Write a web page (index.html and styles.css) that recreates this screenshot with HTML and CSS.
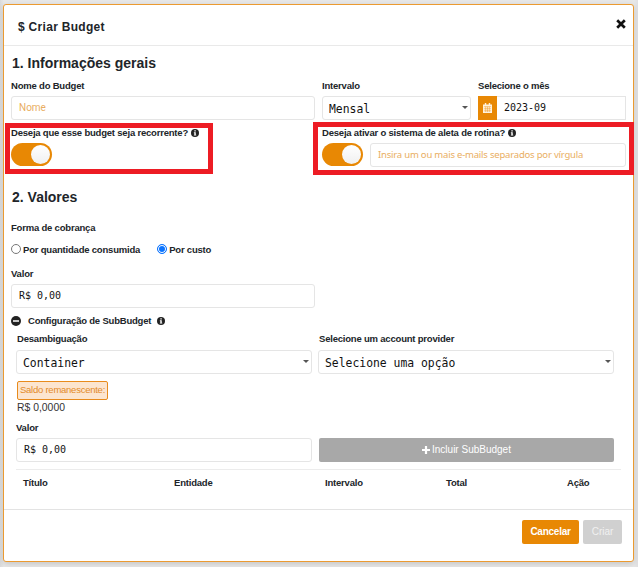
FILE: index.html
```html
<!DOCTYPE html>
<html lang="pt-BR">
<head>
<meta charset="utf-8">
<title>Criar Budget</title>
<link rel="stylesheet" href="styles.css">
</head>
<body>
<svg width="0" height="0" class="defs">
  <symbol id="info" viewBox="0 0 16 16"><circle cx="8" cy="8" r="8" fill="#222"/><path d="M6.7 2.6h2.8v2.3H6.7zM5.7 6.5h3.8v4.8h1v1.9H5.7v-1.9h1V8.4h-1z" fill="#fff"/></symbol>
</svg>
<main class="modal">
  <header class="modal-head">
    <h1>$ Criar Budget</h1>
    <svg class="close" viewBox="0 0 10 10"><path d="M1.2 1.2l7.6 7.6M8.8 1.2L1.2 8.8" stroke="#111" stroke-width="2.7"/></svg>
  </header>

  <section class="general">
    <h2 class="title-general">1. Informações gerais</h2>
    <div class="fields">
      <div class="field"><label>Nome do Budget</label><div class="input ph-nome">Nome</div></div>
      <div class="field"><label>Intervalo</label><div class="input select">Mensal<i class="caret"></i></div></div>
      <div class="field"><label>Selecione o mês</label>
        <div class="date">
          <span class="date-icon"><svg viewBox="0 0 10 11"><path d="M0 1.5h10V11H0zM2 0h1.6v2H2zM6.4 0H8v2H6.4z" fill="#fff3df"/><path d="M1 4h8M1 6.3h8M1 8.6h8M3 4v6M5 4v6M7 4v6" stroke="#e88804" stroke-width=".45"/></svg></span>
          <span class="input date-value">2023-09</span>
        </div>
      </div>
    </div>
    <div class="options">
      <div class="option recurring">
        <div class="question"><label>Deseja que esse budget seja recorrente?</label><svg class="info"><use href="#info"/></svg></div>
        <div class="toggle"><i></i></div>
      </div>
      <div class="option alert">
        <div class="question"><label>Deseja ativar o sistema de aleta de rotina?</label><svg class="info"><use href="#info"/></svg></div>
        <div class="alert-row"><div class="toggle"><i></i></div><div class="input ph-mail">Insira um ou mais e-mails separados por vírgula</div></div>
      </div>
    </div>
  </section>

  <section class="values">
    <h2 class="title-values">2. Valores</h2>
    <label class="billing">Forma de cobrança</label>
    <div class="radios">
      <span class="radio"><i class="dot"></i><label>Por quantidade consumida</label></span>
      <span class="radio"><i class="dot on"></i><label>Por custo</label></span>
    </div>
    <div class="field amount"><label>Valor</label><div class="input money">R$ 0,00</div></div>
    <div class="sub-head">
      <svg class="minus" viewBox="0 0 10 10"><circle cx="5" cy="5" r="5" fill="#222"/><path d="M2 5h6" stroke="#fff" stroke-width="1.5"/></svg>
      <label>Configuração de SubBudget</label>
      <svg class="info"><use href="#info"/></svg>
    </div>
    <div class="sub">
      <div class="pair first">
        <div class="field"><label>Desambiguação</label><div class="input select">Container<i class="caret"></i></div></div>
        <div class="field"><label>Selecione um account provider</label><div class="input select">Selecione uma opção<i class="caret"></i></div></div>
      </div>
      <div class="balance"><span class="badge">Saldo remanescente:</span><span class="remaining">R$ 0,0000</span></div>
      <div class="pair last">
        <div class="field"><label>Valor</label><div class="input money">R$ 0,00</div></div>
        <div class="include"><svg viewBox="0 0 8 8"><path d="M4 0v8M0 4h8" stroke="#fff" stroke-width="2.2"/></svg><span>Incluir SubBudget</span></div>
      </div>
      <div class="thead"><span>Título</span><span>Entidade</span><span>Intervalo</span><span>Total</span><span>Ação</span></div>
    </div>
  </section>

  <footer class="modal-foot"><div class="btn cancel">Cancelar</div><div class="btn create">Criar</div></footer>
</main>
</body>
</html>
```
FILE: styles.css
```css
* { box-sizing: border-box; }
body {
  margin: 0;
  width: 638px;
  height: 567px;
  padding: 4px 4px 5px 3px;
  overflow: hidden;
  background: linear-gradient(90deg, #dadada, #e8e8e8 4px, #e8e8e8 634px, #e0e0e2);
  font-family: "Liberation Sans", Arial, sans-serif;
  color: #212529;
}
.defs { position: absolute; }
.modal {
  height: 558px;
  background: #fff;
  border: 1px solid #eb9a30;
  border-radius: 3px;
  box-shadow: 0 2px 6px rgba(0, 0, 0, .15);
}
.modal-head {
  height: 41px;
  display: flex;
  align-items: center;
  justify-content: space-between;
  padding: 4px 7px 0 14px;
  border-bottom: 1px solid #e9e9e9;
}
h1, h2 { margin: 0; font-weight: 700; white-space: nowrap; }
h1 { font-size: 12px; letter-spacing: .3px; }
h2 { font-size: 14px; }
.close { width: 10px; height: 10px; margin-top: -7px; }
label, .thead { font-size: 9.5px; font-weight: 700; line-height: 12px; letter-spacing: -.2px; white-space: nowrap; }
.general { padding: 8px 0 0 7px; height: 138px; }
.title-general { line-height: 18px; padding-left: 1px; }
.fields {
  display: grid;
  grid-template-columns: 304px 149px 149px;
  column-gap: 7px;
  margin-top: 8px;
}
.field { display: flex; flex-direction: column; gap: 4px; min-width: 0; }
.input {
  height: 24px;
  border: 1px solid #e5e5e5;
  border-radius: 3px;
  padding: 0 7px;
  line-height: 22px;
  white-space: pre;
  background: #fff;
  font-size: 10px;
  color: #111;
}
.select, .money, .date-value { font-family: "DejaVu Sans Mono", monospace; }
.select {
  display: flex;
  align-items: center;
  justify-content: space-between;
  padding: 1px 2px 0 6px;
  font-size: 11.4px;
}
.caret { border: 3px solid transparent; border-top-color: #555; border-bottom: 0; margin-top: -2px; }
.ph-nome { font-family: Roboto, sans-serif; color: #e9ae62; }
.date { display: flex; }
.date-icon {
  width: 19px;
  height: 24px;
  background: #e88804;
  display: flex;
  align-items: center;
  justify-content: center;
}
.date-icon svg { width: 9px; height: 10px; }
.date-value { flex: 1; border-left: 0; border-radius: 0; margin-right: 1px; }
.options { display: flex; margin-top: 7px; }
.recurring { width: 311px; }
.option { position: relative; }
.option::after {
  content: "";
  box-sizing: border-box;
  position: absolute;
  border: 5px solid #ed1c24;
}
.recurring::after { left: -6px; top: -4px; width: 208px; height: 51px; }
.alert::after { left: -9px; top: -5px; width: 321px; height: 53px; }
.question { display: flex; align-items: center; gap: 3px; height: 12px; }
.info { width: 8px; height: 8px; flex: none; }
.toggle {
  width: 41px;
  height: 23px;
  margin-top: 4px;
  border-radius: 12px;
  background: #e88804;
  display: flex;
  justify-content: flex-end;
  padding: 2px;
  flex: none;
}
.toggle i { width: 19px; height: 19px; border-radius: 50%; background: linear-gradient(#fff, #f0f0f0); }
.alert-row { display: flex; gap: 7px; }
.ph-mail { width: 256px; margin-top: 4px; font-family: "Noto Sans", sans-serif; color: #e9ae62; font-size: 9.5px; letter-spacing: -.2px; }

.values { padding-left: 7px; height: 325px; }
.title-values { line-height: 18px; padding: 4px 0 0 1px; }
.billing { display: block; margin-top: 16px; }
.radios { display: flex; gap: 17px; height: 12px; margin-top: 9px; }
.radio { display: flex; align-items: center; gap: 2px; }
.radio label { padding-top: 1px; }
.dot { width: 10px; height: 10px; border: 1px solid #777; border-radius: 50%; }
.dot.on { border-color: #0b74ff; background: #0b74ff; box-shadow: inset 0 0 0 1px #fff; }
.amount { width: 304px; margin-top: 13px; }
.sub-head { display: flex; align-items: center; height: 12px; margin-top: 7px; }
.minus { width: 10px; height: 10px; margin-right: 7px; }
.sub-head .info { margin-left: 6px; }
.sub { padding-left: 5px; margin-top: 6px; }
.pair { display: grid; grid-template-columns: 296px 296px; column-gap: 6px; }
.first .field { gap: 5px; }
.first label { padding-left: 1px; }
.balance { display: flex; flex-direction: column; align-items: flex-start; margin-top: 7px; height: 35px; padding-left: 1px; }
.badge {
  height: 19px;
  flex: none;
  border: 1px solid #e88b1c;
  border-radius: 2px;
  background: #fce5cf;
  color: #e38a28;
  font-size: 9.5px;
  letter-spacing: -.25px;
  line-height: 16px;
  padding: 0 2px;
}
.remaining { font-size: 10.4px; line-height: 15px; color: #333; }
.last { margin-top: 6px; align-items: end; }
.include {
  height: 24px;
  background: #a8a8a8;
  border-radius: 2px;
  display: flex;
  align-items: center;
  justify-content: center;
  gap: 2px;
  padding-bottom: 1px;
  margin-left: 1px;
  color: #fff;
  font-size: 10px;
}
.include svg { width: 8px; height: 8px; }
.thead {
  width: 605px;
  margin-top: 7px;
  border-top: 1px solid #ececec;
  padding: 7px 0 0 7px;
  display: grid;
  grid-template-columns: 151px 151px 121px 121px 1fr;
}
.modal-foot {
  height: 52px;
  border-top: 1px solid #e3e3e3;
  display: flex;
  gap: 4px;
  justify-content: flex-end;
  padding: 10px 11px 0 0;
}
.btn {
  height: 24px;
  border-radius: 2px;
  color: #fff;
  font-size: 10px;
  line-height: 23px;
  text-align: center;
}
.cancel { width: 57px; background: #e88804; font-weight: 700; letter-spacing: -.25px; }
.create { width: 39px; background: #d0d0d0; color: #f0f0f0; }
```
